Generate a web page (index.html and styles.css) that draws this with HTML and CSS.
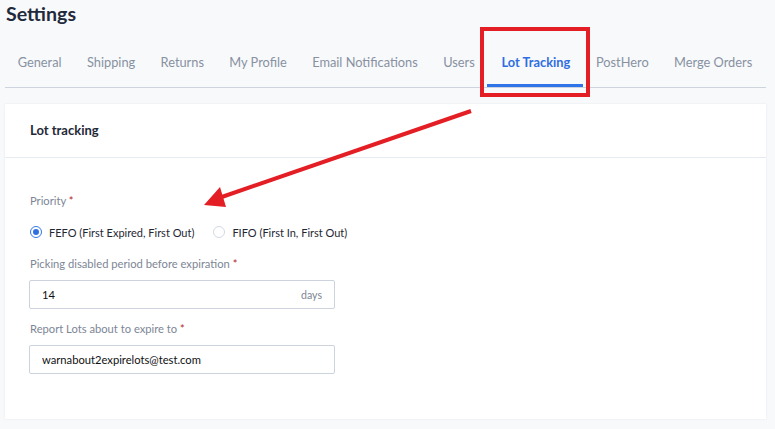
FILE: index.html
```html
<!DOCTYPE html>
<html lang="en">
<head>
<meta charset="utf-8">
<title>Settings</title>
<link rel="stylesheet" href="styles.css">
</head>
<body>
<div class="page">
  <h1 class="title">Settings</h1>
  <nav class="tabs">
    <a class="tab">General</a>
    <a class="tab">Shipping</a>
    <a class="tab">Returns</a>
    <a class="tab">My Profile</a>
    <a class="tab">Email Notifications</a>
    <a class="tab">Users</a>
    <a class="tab active">Lot Tracking</a>
    <a class="tab">PostHero</a>
    <a class="tab">Merge Orders</a>
  </nav>
  <section class="card">
    <header class="card-head">Lot tracking</header>
    <div class="card-body">
      <div class="label">Priority <span class="req">*</span></div>
      <div class="radios">
        <label class="radio"><span class="dot checked"></span>FEFO (First Expired, First Out)</label>
        <label class="radio"><span class="dot"></span>FIFO (First In, First Out)</label>
      </div>
      <div class="label label-gap">Picking disabled period before expiration <span class="req">*</span></div>
      <div class="input"><span class="val">14</span><span class="suffix">days</span></div>
      <div class="label label-gap2">Report Lots about to expire to <span class="req">*</span></div>
      <div class="input"><span class="val">warnabout2expirelots@test.com</span></div>
    </div>
  </section>
</div>
<svg class="annot" width="775" height="429" viewBox="0 0 775 429">
  <line x1="471" y1="111" x2="216" y2="199" stroke="#e41e25" stroke-width="4" stroke-linecap="butt"/>
  <polygon points="204,205 220,187 226,207" fill="#e41e25"/>
</svg>
</body>
</html>
```
FILE: styles.css
```css
* { box-sizing: border-box; }
html, body { margin: 0; padding: 0; }
body {
  background: #f8f9fb;
  font-family: Lato, "Open Sans", Arial, sans-serif;
  width: 775px;
  height: 429px;
  overflow: hidden;
  position: relative;
}
.page { padding: 0 9px 0 5px; }
.title {
  margin: 0;
  padding-left: 1px;
  font-size: 19.6px;
  line-height: 28px;
  font-weight: 700;
  color: #1f2a3c;
}
.tabs {
  display: flex;
  margin-top: 9px;
  border-bottom: 1px solid #cdd4dd;
}
.tab {
  display: block;
  padding: 16px 12.7px 13px;
  font-size: 12.8px;
  line-height: 18px;
  color: #8791a1;
  border-bottom: 3px solid transparent;
  white-space: nowrap;
}
.tab.active {
  color: #2f6ee0;
  font-weight: 700;
  border-bottom-color: #2f73e8;
  position: relative;
  padding-left: 14px;
  padding-right: 13px;
}
.tab.active::after {
  content: "";
  position: absolute;
  left: -7px;
  right: -7px;
  top: -10px;
  bottom: -13px;
  border: 4px solid #e41e25;
}
.card {
  margin-top: 16px;
  background: #fff;
  box-shadow: 0 0 2px rgba(30, 40, 60, 0.08);
  height: 315px;
}
.card-head {
  height: 54px;
  line-height: 53px;
  padding: 0 25px;
  font-size: 13px;
  font-weight: 700;
  color: #1f2937;
  border-bottom: 1px solid #e6ebf1;
}
.card-body { padding: 35px 24px 0 24px; }
.label {
  font-size: 11.2px;
  line-height: 16px;
  color: #7d8696;
  padding-left: 1px;
}
.req { color: #b4232a; }
.radios {
  display: flex;
  gap: 18px;
  margin-top: 14px;
  height: 18px;
  align-items: center;
}
.radio {
  display: flex;
  align-items: center;
  gap: 7px;
  font-size: 11px;
  color: #1f2733;
}
.dot {
  width: 12px;
  height: 12px;
  border-radius: 50%;
  border: 1px solid #d3d9e1;
  margin-left: 1px;
  background: #fff;
  display: inline-block;
  position: relative;
}
.dot.checked { border-color: #3478e6; }
.dot.checked::after {
  content: "";
  position: absolute;
  left: 2px; top: 2px;
  width: 6px; height: 6px;
  border-radius: 50%;
  background: #2f6fe0;
}
.label-gap { margin-top: 15px; }
.label-gap2 { margin-top: 12px; }
.input {
  margin-top: 8px;
  width: 306px;
  height: 29px;
  border: 1px solid #ccd3dc;
  border-radius: 2px;
  display: flex;
  align-items: center;
  justify-content: space-between;
  padding: 0 12px 0 12px;
}
.val { font-size: 11.2px; color: #111; }
.suffix { font-size: 10.6px; color: #7d8593; }
.annot {
  position: absolute;
  left: 0;
  top: 0;
  pointer-events: none;
}
```
